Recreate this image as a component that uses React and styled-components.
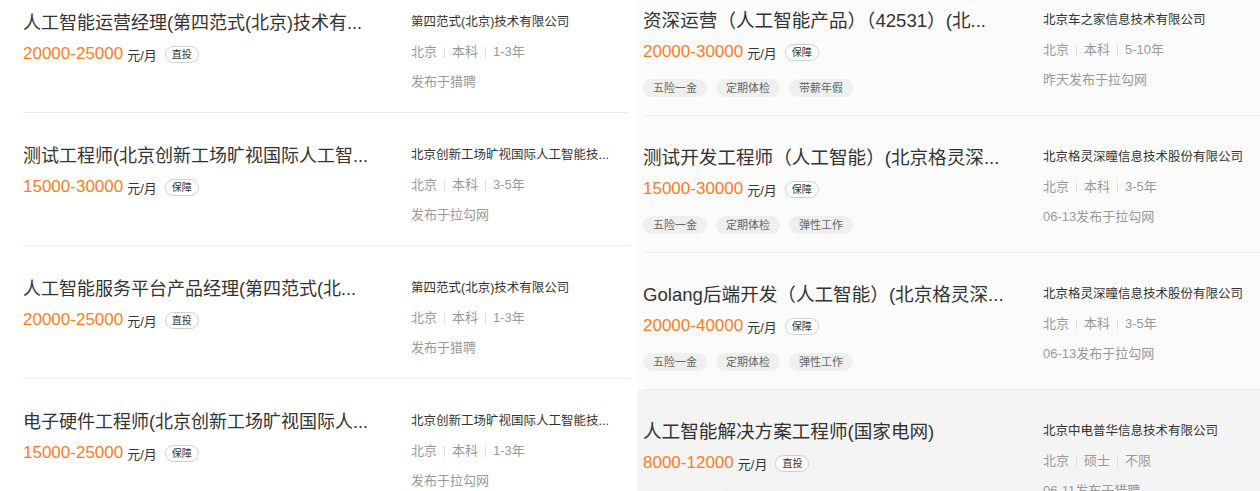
import React from 'react';
import styled, { createGlobalStyle } from 'styled-components';

const GlobalStyle = createGlobalStyle`
  html, body {
    margin: 0;
    padding: 0;
    background: #ffffff;
    overflow: hidden;
  }
  body {
    font-family: "Liberation Sans", "Noto Sans CJK SC", sans-serif;
    color: #333;
  }
`;

const Page = styled.div`
  display: flex;
  gap: 7px;
  width: 1260px;
  height: 491px;
  overflow: hidden;
`;

const Column = styled.section`
  width: ${({ $width }) => $width}px;
  flex-shrink: 0;
  background: ${({ $bg }) => $bg};
  margin-top: ${({ $offset }) => $offset}px;
`;

const Card = styled.article`
  padding-left: ${({ $indent }) => $indent}px;
  background: ${({ $active }) => ($active ? '#f4f4f4' : 'transparent')};
`;

const CardInner = styled.div`
  display: flex;
  height: ${({ $height }) => $height}px;
  box-sizing: border-box;
  padding-top: ${({ $top }) => $top}px;
  border-bottom: 1px solid #ececec;
`;

const Main = styled.div`
  width: ${({ $width }) => $width}px;
  flex-shrink: 0;
`;

const Title = styled.h3`
  margin: 0;
  font-size: ${({ $size }) => $size}px;
  line-height: 24px;
  font-weight: 400;
  color: #333;
  white-space: nowrap;
  overflow: hidden;
`;

const SalaryRow = styled.div`
  display: flex;
  align-items: center;
  margin-top: 8px;
  height: 22px;
`;

const Salary = styled.span`
  font-size: 17px;
  color: #fd7d1c;
`;

const Unit = styled.span`
  margin-left: 4px;
  font-size: 13px;
  color: #333;
`;

const Badge = styled.span`
  margin-left: 8px;
  height: 15px;
  padding: 0 6px;
  border: 1px solid #cfcfcf;
  border-radius: 9px;
  font-size: 10px;
  line-height: 15px;
  color: #333;
  background: #fff;
`;

const Tags = styled.div`
  display: flex;
  gap: 9px;
  margin-top: 16px;
`;

const Tag = styled.span`
  height: 18px;
  padding: 0 10px;
  border-radius: 9px;
  background: #efefef;
  font-size: 11px;
  line-height: 18px;
  color: #666;
`;

const Side = styled.div`
  display: flex;
  flex-direction: column;
  padding-top: 1px;
`;

const Company = styled.div`
  font-size: 12.5px;
  line-height: 20px;
  color: #333;
  white-space: nowrap;
`;

const Meta = styled.div`
  display: flex;
  align-items: center;
  margin-top: 10px;
  font-size: 13px;
  line-height: 20px;
  color: #999;
`;

const Sep = styled.span`
  width: 1px;
  height: 11px;
  margin: 0 7px;
  background: #dedede;
`;

const Published = styled.div`
  margin-top: 10px;
  font-size: 13px;
  line-height: 20px;
  color: #999;
`;

const leftJobs = [
  {
    title: '人工智能运营经理(第四范式(北京)技术有...',
    salary: '20000-25000',
    badge: '直投',
    company: '第四范式(北京)技术有限公司',
    meta: ['北京', '本科', '1-3年'],
    published: '发布于猎聘',
  },
  {
    title: '测试工程师(北京创新工场旷视国际人工智...',
    salary: '15000-30000',
    badge: '保障',
    company: '北京创新工场旷视国际人工智能技...',
    meta: ['北京', '本科', '3-5年'],
    published: '发布于拉勾网',
  },
  {
    title: '人工智能服务平台产品经理(第四范式(北...',
    salary: '20000-25000',
    badge: '直投',
    company: '第四范式(北京)技术有限公司',
    meta: ['北京', '本科', '1-3年'],
    published: '发布于猎聘',
  },
  {
    title: '电子硬件工程师(北京创新工场旷视国际人...',
    salary: '15000-25000',
    badge: '保障',
    company: '北京创新工场旷视国际人工智能技...',
    meta: ['北京', '本科', '1-3年'],
    published: '发布于拉勾网',
  },
];

const rightJobs = [
  {
    title: '资深运营（人工智能产品）（42531）(北...',
    salary: '20000-30000',
    badge: '保障',
    tags: ['五险一金', '定期体检', '带薪年假'],
    company: '北京车之家信息技术有限公司',
    meta: ['北京', '本科', '5-10年'],
    published: '昨天发布于拉勾网',
  },
  {
    title: '测试开发工程师（人工智能）(北京格灵深...',
    salary: '15000-30000',
    badge: '保障',
    tags: ['五险一金', '定期体检', '弹性工作'],
    company: '北京格灵深瞳信息技术股份有限公司',
    meta: ['北京', '本科', '3-5年'],
    published: '06-13发布于拉勾网',
  },
  {
    title: 'Golang后端开发（人工智能）(北京格灵深...',
    salary: '20000-40000',
    badge: '保障',
    tags: ['五险一金', '定期体检', '弹性工作'],
    company: '北京格灵深瞳信息技术股份有限公司',
    meta: ['北京', '本科', '3-5年'],
    published: '06-13发布于拉勾网',
  },
  {
    title: '人工智能解决方案工程师(国家电网)',
    salary: '8000-12000',
    badge: '直投',
    tags: ['五险一金', '定期体检', '弹性工作'],
    company: '北京中电普华信息技术有限公司',
    meta: ['北京', '硕士', '不限'],
    published: '06-11发布于猎聘',
    active: true,
  },
];

const JobCard = ({ job, indent, height, top, mainWidth, titleSize }) => (
  <Card $indent={indent} $active={job.active}>
    <CardInner $height={height} $top={top}>
      <Main $width={mainWidth}>
        <Title $size={titleSize}>{job.title}</Title>
        <SalaryRow>
          <Salary>{job.salary}</Salary>
          <Unit>元/月</Unit>
          <Badge>{job.badge}</Badge>
        </SalaryRow>
        {job.tags && (
          <Tags>
            {job.tags.map((t) => (
              <Tag key={t}>{t}</Tag>
            ))}
          </Tags>
        )}
      </Main>
      <Side>
        <Company>{job.company}</Company>
        <Meta>
          {job.meta.map((m, i) => (
            <React.Fragment key={m}>
              {i > 0 && <Sep />}
              <span>{m}</span>
            </React.Fragment>
          ))}
        </Meta>
        <Published>{job.published}</Published>
      </Side>
    </CardInner>
  </Card>
);

const App = () => (
  <>
    <GlobalStyle />
    <Page>
      <Column $width={630} $bg="#ffffff" $offset={-20}>
        {leftJobs.map((job, i) => (
          <JobCard key={i} job={job} indent={23} height={133} top={31} mainWidth={388} titleSize={18} />
        ))}
      </Column>
      <Column $width={623} $bg="#fbfbfb" $offset={-21}>
        {rightJobs.map((job, i) => (
          <JobCard key={i} job={job} indent={6} height={137} top={30} mainWidth={400} titleSize={18.6} />
        ))}
      </Column>
    </Page>
  </>
);

export default App;
